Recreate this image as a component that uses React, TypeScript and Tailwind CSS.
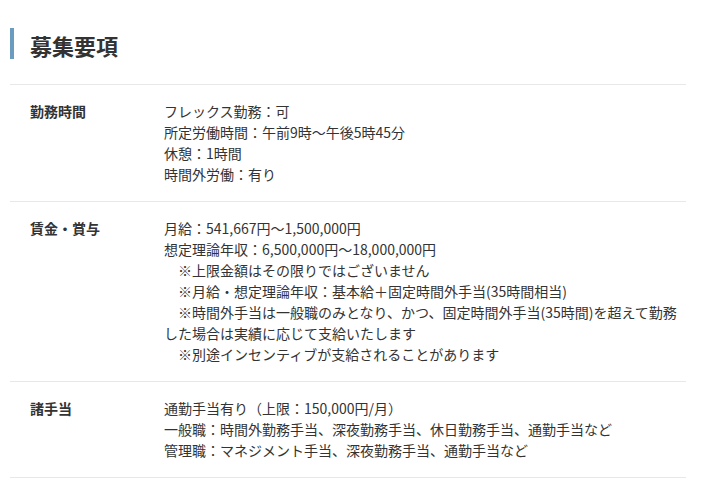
import React from "react";

const rows: { label: string; lines: string[] }[] = [
  {
    label: "勤務時間",
    lines: [
      "フレックス勤務：可",
      "所定労働時間：午前9時～午後5時45分",
      "休憩：1時間",
      "時間外労働：有り",
    ],
  },
  {
    label: "賃金・賞与",
    lines: [
      "月給：541,667円～1,500,000円",
      "想定理論年収：6,500,000円～18,000,000円",
      "　※上限金額はその限りではございません",
      "　※月給・想定理論年収：基本給＋固定時間外手当(35時間相当)",
      "　※時間外手当は一般職のみとなり、かつ、固定時間外手当(35時間)を超えて勤務",
      "した場合は実績に応じて支給いたします",
      "　※別途インセンティブが支給されることがあります",
    ],
  },
  {
    label: "諸手当",
    lines: [
      "通勤手当有り（上限：150,000円/月）",
      "一般職：時間外勤務手当、深夜勤務手当、休日勤務手当、通勤手当など",
      "管理職：マネジメント手当、深夜勤務手当、通勤手当など",
    ],
  },
];

export default function App() {
  return (
    <div
      className="w-[714px] h-[479px] overflow-hidden bg-white text-[#333333]"
      style={{ fontFamily: '"Noto Sans CJK JP", "Noto Sans", sans-serif' }}
    >
      <div className="pl-[10px] pr-[28px] pt-[28px]">
        <div className="flex items-center h-[31px] border-l-4 border-[#6a9cc0] pl-4">
          <h2 className="text-[22px] font-bold leading-none tracking-[0px] pt-[2px]">募集要項</h2>
        </div>
        <div className="mt-[25px] border-t border-[#e8e8e8]">
          {rows.map((r) => (
            <div key={r.label} className="flex py-4 border-b border-[#e8e8e8] text-[14px] leading-[21px]">
              <div className="w-[154px] shrink-0 pl-5 font-bold">{r.label}</div>
              <div className="flex-1">
                {r.lines.map((l, i) => (
                  <div key={i} className="whitespace-nowrap">{l}</div>
                ))}
              </div>
            </div>
          ))}
        </div>
      </div>
    </div>
  );
}
